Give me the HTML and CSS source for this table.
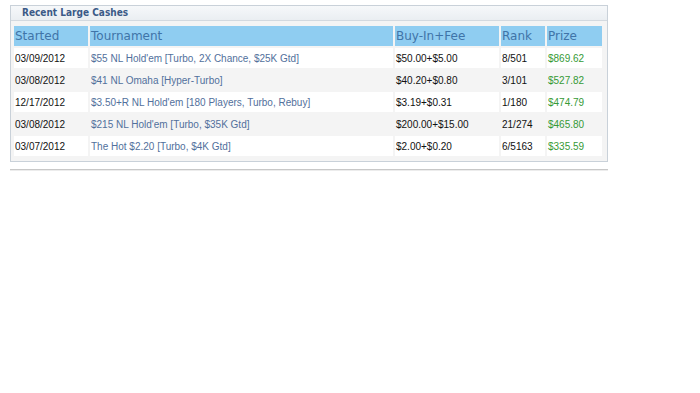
FILE: index.html
```html
<!DOCTYPE html>
<html>
<head>
<meta charset="utf-8">
<link rel="stylesheet" href="styles.css">
</head>
<body>
<div class="panel">
  <div class="panel-title">Recent Large Cashes</div>
  <table class="cashes">
    <colgroup>
      <col class="c-date"><col class="c-tour"><col class="c-buy"><col class="c-rank"><col class="c-prize">
    </colgroup>
    <thead>
      <tr><th>Started</th><th>Tournament</th><th>Buy-In+Fee</th><th>Rank</th><th>Prize</th></tr>
    </thead>
    <tbody>
      <tr><td>03/09/2012</td><td class="tour">$55 NL Hold'em [Turbo, 2X Chance, $25K Gtd]</td><td>$50.00+$5.00</td><td>8/501</td><td class="prize">$869.62</td></tr>
      <tr class="alt"><td>03/08/2012</td><td class="tour">$41 NL Omaha [Hyper-Turbo]</td><td>$40.20+$0.80</td><td>3/101</td><td class="prize">$527.82</td></tr>
      <tr><td>12/17/2012</td><td class="tour">$3.50+R NL Hold'em [180 Players, Turbo, Rebuy]</td><td>$3.19+$0.31</td><td>1/180</td><td class="prize">$474.79</td></tr>
      <tr class="alt"><td>03/08/2012</td><td class="tour">$215 NL Hold'em [Turbo, $35K Gtd]</td><td>$200.00+$15.00</td><td>21/274</td><td class="prize">$465.80</td></tr>
      <tr><td>03/07/2012</td><td class="tour">The Hot $2.20 [Turbo, $4K Gtd]</td><td>$2.00+$0.20</td><td>6/5163</td><td class="prize">$335.59</td></tr>
    </tbody>
  </table>
</div>
<div class="rule"></div>
</body>
</html>
```
FILE: styles.css
```css
html, body { margin: 0; padding: 0; background: #ffffff; }
body { padding: 5px 0 0 10px; font-family: "Liberation Sans", Arial, sans-serif; }
.panel {
  width: 596px;
  border: 1px solid #c9d1d9;
  background: #f4f4f4;
  padding-bottom: 3px;
}
.panel-title {
  height: 14px;
  line-height: 14px;
  padding-left: 11px;
  font-family: "DejaVu Sans Condensed", "DejaVu Sans", Verdana, sans-serif;
  font-size: 10px;
  font-weight: bold;
  color: #3b5a87;
  background: linear-gradient(#f6f8fa, #eaeef2);
  border-bottom: 1px solid #d3d9df;
}
.cashes {
  border-collapse: separate;
  border-spacing: 2px;
  margin: 3px 0 0 1px;
  table-layout: fixed;
  width: 592px;
}
.c-date { width: 74px; }
.c-tour { width: 303px; }
.c-buy { width: 104px; }
.c-rank { width: 44px; }
.c-prize { width: 55px; }
.cashes th {
  background: #8fcdf1;
  color: #3f74a8;
  font-family: "DejaVu Sans", Verdana, sans-serif;
  font-weight: normal;
  font-size: 12px;
  text-align: left;
  height: 20px;
  padding: 0 0 0 1px;
}
.cashes td {
  background: #ffffff;
  color: #111111;
  font-size: 10px;
  height: 20px;
  padding: 0 0 0 1px;
  white-space: nowrap;
}
.cashes tr.alt td { background: #f4f4f4; }
.cashes td.tour { color: #52709c; }
.cashes td.prize { color: #369a36; }
.rule {
  width: 598px;
  height: 1px;
  margin-top: 7px;
  background: #c8c8c8;
  border-bottom: 1px solid #ececec;
}
```
